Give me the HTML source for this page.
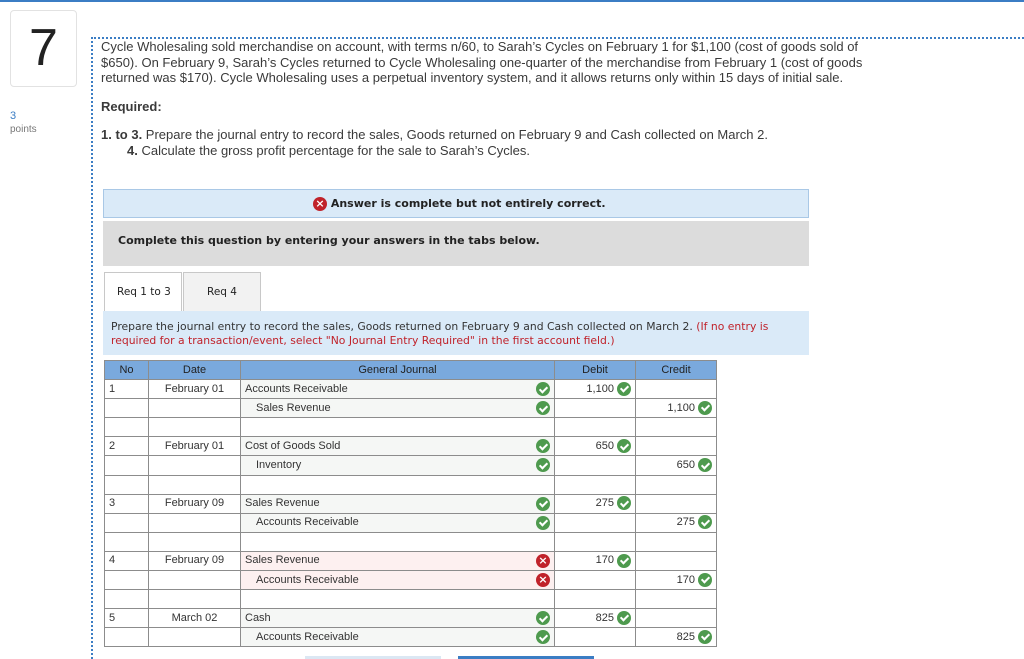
<!DOCTYPE html>
<html><head><meta charset="utf-8"><style>
*{margin:0;padding:0;box-sizing:border-box}
body{width:1024px;height:659px;overflow:hidden;background:#fff;font-family:"Liberation Sans",sans-serif;position:relative;color:#333}
.a{position:absolute;white-space:nowrap}
.q{font-size:13px;color:#3a3a3a}
.v{font-family:"DejaVu Sans",sans-serif}
table{border-collapse:collapse;position:absolute;left:104px;top:360px;font-size:11px;color:#333;table-layout:fixed}
td,th{border:1px solid #8c8c8c;height:19.1px;padding:0 4px;line-height:17px;position:relative}
th{background:#7aa9dd;font-weight:normal;color:#222}
.g{background:#f5f7f5}
.r{background:#fdf0f0}
.ck{display:inline-block;width:14px;height:14px;border-radius:50%;background:#4e9a4e;vertical-align:middle;position:relative}
.ck::after{content:"";position:absolute;left:5px;top:2.5px;width:3px;height:6px;border:solid #fff;border-width:0 2px 2px 0;transform:rotate(45deg)}
.x{display:inline-block;width:14px;height:14px;border-radius:50%;background:#c0222a;color:#fff;font-size:11px;font-weight:bold;line-height:14px;text-align:center;vertical-align:middle;font-family:"DejaVu Sans",sans-serif}
.ic{text-align:right;padding-right:4px}
.rt{position:absolute;right:4px;top:2px}
</style></head><body>
<div class="a" style="left:0;top:0;width:1024px;height:2px;background:#3b7dc4"></div>
<div class="a" style="left:10px;top:10px;width:67px;height:77px;border:1px solid #e2e2e2;border-radius:4px;font-size:52px;text-align:center;line-height:75px;color:#222">7</div>
<div class="a" style="left:10px;top:110px;font-size:11px;color:#3b7dc4">3</div>
<div class="a" style="left:10px;top:124px;font-size:10px;color:#777">points</div>
<div class="a" style="left:91px;top:37px;width:933px;height:622px;border-top:2px dotted #3b7dc4;border-left:2px dotted #3b7dc4"></div>
<div class="a q" style="left:101px;top:39px;line-height:15.5px">Cycle Wholesaling sold merchandise on account, with terms n/60, to Sarah’s Cycles on February 1 for $1,100 (cost of goods sold of<br>$650). On February 9, Sarah’s Cycles returned to Cycle Wholesaling one-quarter of the merchandise from February 1 (cost of goods<br>returned was $170). Cycle Wholesaling uses a perpetual inventory system, and it allows returns only within 15 days of initial sale.</div>
<div class="a q" style="left:101px;top:99px;font-weight:bold">Required:</div>
<div class="a q" style="left:101px;top:127px"><b>1. to 3.</b> Prepare the journal entry to record the sales, Goods returned on February 9 and Cash collected on March 2.</div>
<div class="a q" style="left:127px;top:143px"><b>4.</b> Calculate the gross profit percentage for the sale to Sarah’s Cycles.</div>
<div class="a" style="left:103px;top:189px;width:706px;height:29px;background:#daeaf8;border:1px solid #a9c8e6"></div>
<div class="a v" style="left:313px;top:197px;font-size:11px;font-weight:bold;color:#222"><span class="x">×</span> Answer is complete but not entirely correct.</div>
<div class="a" style="left:103px;top:221px;width:706px;height:45px;background:#dcdcdc"></div>
<div class="a v" style="left:118px;top:234px;font-size:11px;font-weight:bold;color:#222">Complete this question by entering your answers in the tabs below.</div>
<div class="a" style="left:104px;top:272px;width:78px;height:40px;border:1px solid #c8c8c8;border-bottom:none;background:#fff"></div>
<div class="a" style="left:183px;top:272px;width:78px;height:40px;border:1px solid #c8c8c8;background:#f2f2f2"></div>
<div class="a v" style="left:117px;top:286px;font-size:10.5px;color:#222">Req 1 to 3</div>
<div class="a v" style="left:207px;top:286px;font-size:10.5px;color:#222">Req 4</div>
<div class="a" style="left:103px;top:311px;width:706px;height:44px;background:#daeaf8"></div>
<div class="a v" style="left:111px;top:320px;font-size:10.8px;line-height:14px;color:#333">Prepare the journal entry to record the sales,  Goods returned on February 9 and Cash collected on March 2. <span style="color:#c0222a">(If no entry is</span><br><span style="color:#c0222a">required for a transaction/event, select "No Journal Entry Required" in the first account field.)</span></div>
<table>
<colgroup><col style="width:44px"><col style="width:92px"><col style="width:314px"><col style="width:81px"><col style="width:81px"></colgroup>
<tr><th>No</th><th>Date</th><th>General Journal</th><th>Debit</th><th>Credit</th></tr>
<tr><td>1</td><td style="text-align:center">February 01</td><td class="g">Accounts Receivable<span class="ck rt"></span></td><td class="ic">1,100 <span class="ck"></span></td><td></td></tr>
<tr><td></td><td></td><td class="g" style="padding-left:15px">Sales Revenue<span class="ck rt"></span></td><td></td><td class="ic">1,100 <span class="ck"></span></td></tr>
<tr><td></td><td></td><td></td><td></td><td></td></tr>
<tr><td>2</td><td style="text-align:center">February 01</td><td class="g">Cost of Goods Sold<span class="ck rt"></span></td><td class="ic">650 <span class="ck"></span></td><td></td></tr>
<tr><td></td><td></td><td class="g" style="padding-left:15px">Inventory<span class="ck rt"></span></td><td></td><td class="ic">650 <span class="ck"></span></td></tr>
<tr><td></td><td></td><td></td><td></td><td></td></tr>
<tr><td>3</td><td style="text-align:center">February 09</td><td class="g">Sales Revenue<span class="ck rt"></span></td><td class="ic">275 <span class="ck"></span></td><td></td></tr>
<tr><td></td><td></td><td class="g" style="padding-left:15px">Accounts Receivable<span class="ck rt"></span></td><td></td><td class="ic">275 <span class="ck"></span></td></tr>
<tr><td></td><td></td><td></td><td></td><td></td></tr>
<tr><td>4</td><td style="text-align:center">February 09</td><td class="r">Sales Revenue<span class="x rt">×</span></td><td class="ic">170 <span class="ck"></span></td><td></td></tr>
<tr><td></td><td></td><td class="r" style="padding-left:15px">Accounts Receivable<span class="x rt">×</span></td><td></td><td class="ic">170 <span class="ck"></span></td></tr>
<tr><td></td><td></td><td></td><td></td><td></td></tr>
<tr><td>5</td><td style="text-align:center">March 02</td><td class="g">Cash<span class="ck rt"></span></td><td class="ic">825 <span class="ck"></span></td><td></td></tr>
<tr><td></td><td></td><td class="g" style="padding-left:15px">Accounts Receivable<span class="ck rt"></span></td><td></td><td class="ic">825 <span class="ck"></span></td></tr>
</table>
<div class="a" style="left:305px;top:656px;width:136px;height:3px;background:#dbe7f3"></div>
<div class="a" style="left:458px;top:656px;width:136px;height:3px;background:#3b7dc4"></div>
</body></html>
